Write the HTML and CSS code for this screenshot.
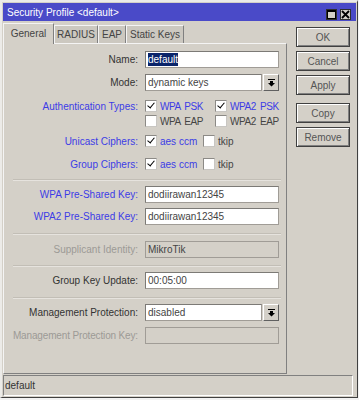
FILE: index.html
```html
<!DOCTYPE html>
<html lang="en">
<head>
    <meta charset="UTF-8">
    <title>Security Profile &lt;default&gt;</title>
    <link rel="stylesheet" href="styles.css">
</head>
<body>
    <div class="window">
        <div class="titlebar">
            <span class="title">Security Profile &lt;default&gt;</span>
            <div class="title-btns">
                <span class="tbtn">
                    <svg width="9" height="9" viewBox="0 0 9 9"><path d="M0 0h9v2H0z M0 0h1v9H0z M8 0h1v9H8z M0 8h9v1H0z" fill="#000"/></svg>
                </span>
                <span class="tbtn">
                    <svg width="9" height="9" viewBox="0 0 9 9"><path d="M1 1l7 7M8 1L1 8" stroke="#000" stroke-width="1.8"/></svg>
                </span>
            </div>
        </div>

        <div class="main">
            <div class="left">
                <div class="tabs">
                    <div class="tab active">General</div>
                    <div class="tab t-radius">RADIUS</div>
                    <div class="tab t-eap">EAP</div>
                    <div class="tab t-static">Static Keys</div>
                </div>

                <div class="panel">
                    <div class="row r-name">
                        <span class="label">Name:</span>
                        <div class="field"><span class="selected">default</span></div>
                    </div>
                    <div class="row r-mode">
                        <span class="label">Mode:</span>
                        <div class="field short">dynamic keys</div>
                        <span class="dropbtn">
                            <svg width="7" height="8" viewBox="0 0 7 8"><path d="M0 0h7v1H0z M2 2h3v2h2L3.5 7.5 0 4h2z" fill="#000"/></svg>
                        </span>
                    </div>
                    <div class="row check-row r-auth1">
                        <span class="label blue">Authentication Types:</span>
                        <span class="opt wide"><span class="box checked"></span><span class="blue caps">WPA PSK</span></span>
                        <span class="opt"><span class="box checked"></span><span class="blue caps">WPA2 PSK</span></span>
                    </div>
                    <div class="row check-row r-auth2">
                        <span class="label"></span>
                        <span class="opt wide"><span class="box"></span><span class="caps">WPA EAP</span></span>
                        <span class="opt"><span class="box"></span><span class="caps">WPA2 EAP</span></span>
                    </div>
                    <div class="row check-row r-unicast">
                        <span class="label blue">Unicast Ciphers:</span>
                        <span class="opt narrow"><span class="box checked"></span><span class="blue">aes ccm</span></span>
                        <span class="opt"><span class="box"></span>tkip</span>
                    </div>
                    <div class="row check-row r-group">
                        <span class="label blue">Group Ciphers:</span>
                        <span class="opt narrow"><span class="box checked"></span><span class="blue">aes ccm</span></span>
                        <span class="opt"><span class="box"></span>tkip</span>
                    </div>

                    <div class="sep"></div>

                    <div class="row r-wpa">
                        <span class="label blue">WPA Pre-Shared Key:</span>
                        <div class="field">dodiirawan12345</div>
                    </div>
                    <div class="row r-wpa2">
                        <span class="label blue">WPA2 Pre-Shared Key:</span>
                        <div class="field">dodiirawan12345</div>
                    </div>

                    <div class="sep"></div>

                    <div class="row r-supp">
                        <span class="label grey">Supplicant Identity:</span>
                        <div class="field disabled">MikroTik</div>
                    </div>

                    <div class="sep s-supp"></div>

                    <div class="row r-gku">
                        <span class="label">Group Key Update:</span>
                        <div class="field">00:05:00</div>
                    </div>

                    <div class="sep"></div>

                    <div class="row r-mgmt">
                        <span class="label">Management Protection:</span>
                        <div class="field short">disabled</div>
                        <span class="dropbtn">
                            <svg width="7" height="8" viewBox="0 0 7 8"><path d="M0 0h7v1H0z M2 2h3v2h2L3.5 7.5 0 4h2z" fill="#000"/></svg>
                        </span>
                    </div>
                    <div class="row r-mgmtkey">
                        <span class="label grey tight">Management Protection Key:</span>
                        <div class="field disabled"></div>
                    </div>
                </div>
            </div>

            <div class="buttons">
                <button class="btn">OK</button>
                <button class="btn">Cancel</button>
                <button class="btn">Apply</button>
                <button class="btn gap">Copy</button>
                <button class="btn">Remove</button>
            </div>
        </div>

        <div class="statusbar">default</div>
    </div>
</body>
</html>
```

FILE: styles.css
```css
body {
    margin: 0;
    background: #f2f2f2;
    font-family: "Liberation Sans", Arial, sans-serif;
    font-size: 10px;
    color: #333;
}
.window {
    box-sizing: border-box;
    width: 358px;
    height: 398px;
    background: #d4d0c8;
    border-top: 2px solid #ecebe8;
    border-left: 2px solid #ecebe8;
    border-right: 1px solid #404040;
    border-bottom: 1px solid #404040;
    padding: 1px;
}
.titlebar {
    height: 18px;
    background: #4a4ac8;
    color: #fff;
    display: flex;
    align-items: center;
    justify-content: space-between;
    padding-left: 4px;
}
.title {
    font-size: 10px;
    margin-top: 1px;
}
.title-btns {
    display: flex;
    gap: 3px;
    margin-right: 5px;
    margin-top: 4px;
}
.tbtn {
    box-sizing: border-box;
    width: 11px;
    height: 11px;
    background: #d4d0c8;
    border: 1px solid #303030;
    display: flex;
    align-items: center;
    justify-content: center;
}
.tbtn svg {
    display: block;
}
.main {
    display: flex;
}
.left {
    width: 284px;
}
.tabs {
    margin-top: 2px;
    height: 20px;
    display: flex;
    align-items: flex-end;
    position: relative;
    z-index: 1;
}
.tab {
    box-sizing: border-box;
    height: 18px;
    background: #ccc8c0;
    border-top: 1px solid #f4f4f4;
    border-left: 1px solid #f4f4f4;
    border-right: 1px solid #808080;
    display: flex;
    align-items: center;
    justify-content: center;
    color: #444;
}
.tab.active {
    width: 51px;
    height: 21px;
    margin-bottom: -1px;
    background: #d4d0c8;
    padding-bottom: 2px;
}
.t-radius {
    width: 44px;
}
.t-eap {
    width: 28px;
}
.t-static {
    width: 58px;
}
.panel {
    box-sizing: border-box;
    height: 331px;
    border-top: 1px solid #f4f4f4;
    border-left: 1px solid #f4f4f4;
    border-right: 1px solid #808080;
    border-bottom: 1px solid #808080;
}
.row {
    display: flex;
    align-items: center;
    height: 17px;
    margin-top: 6px;
}
.check-row {
    height: 14px;
}
.r-name { margin-top: 7px; }
.r-auth1 { margin-top: 8px; }
.r-auth2 { margin-top: 1px; }
.r-group { margin-top: 9px; }
.r-wpa2 { margin-top: 5px; }
.r-supp { margin-top: 7px; }
.label {
    width: 134px;
    margin-right: 7px;
    text-align: right;
    white-space: nowrap;
    flex-shrink: 0;
}
.tight {
    letter-spacing: -0.15px;
}
.caps {
    letter-spacing: -0.4px;
    word-spacing: 1.5px;
}
.blue {
    color: #3c3ce6;
}
.grey {
    color: #9c9a96;
}
.field {
    box-sizing: border-box;
    width: 134px;
    height: 17px;
    background: #fff;
    border: 1px solid #a09c96;
    border-top-color: #7c7a76;
    border-left-color: #7c7a76;
    padding-left: 2px;
    display: flex;
    align-items: center;
    color: #444;
}
.field.short {
    width: 117px;
}
.field.disabled {
    background: #d4d0c8;
    border-color: #a09c96;
}
.selected {
    background: #0a246a;
    color: #fff;
    padding: 1px 0;
}
.dropbtn {
    box-sizing: border-box;
    width: 16px;
    height: 17px;
    margin-left: 1px;
    border-top: 1px solid #fff;
    border-left: 1px solid #fff;
    border-right: 1px solid #606060;
    border-bottom: 1px solid #606060;
    display: flex;
    align-items: center;
    justify-content: center;
}
.opt {
    display: flex;
    align-items: center;
    gap: 3px;
    color: #444;
}
.opt.wide {
    width: 70px;
}
.opt.narrow {
    width: 58px;
}
.box {
    box-sizing: border-box;
    width: 12px;
    height: 12px;
    background: #fff;
    border: 1px solid #8c8a86;
    border-right-color: #c8c6c2;
    border-bottom-color: #c8c6c2;
    position: relative;
}
.box.checked::after {
    content: "";
    position: absolute;
    left: 3px;
    top: 0;
    width: 3px;
    height: 6px;
    border-right: 1.5px solid #000;
    border-bottom: 1.5px solid #000;
    transform: rotate(40deg);
}
.sep {
    height: 1px;
    margin: 8px 5px 0 9px;
    background: #c2beb6;
    box-shadow: 0 1px 0 #e6e3de;
}
.s-supp {
    margin-top: 7px;
}
.buttons {
    margin-left: 9px;
    width: 54px;
    padding-top: 6px;
    display: flex;
    flex-direction: column;
    gap: 4px;
}
.btn {
    box-sizing: border-box;
    height: 20px;
    width: 54px;
    padding: 0;
    font-family: "Liberation Sans", Arial, sans-serif;
    font-size: 10px;
    color: #555;
    background: #d4d0c8;
    border: 1px solid #404040;
    box-shadow: inset 1px 1px 0 #fff, inset -1px -1px 0 #808080;
}
.btn.gap {
    margin-top: 4px;
}
.statusbar {
    box-sizing: border-box;
    width: 350px;
    height: 21px;
    margin-top: 1px;
    border-top: 1px solid #808080;
    border-left: 1px solid #808080;
    border-right: 1px solid #fff;
    border-bottom: 1px solid #fff;
    padding-left: 1px;
    display: flex;
    align-items: center;
    color: #333;
}
```
